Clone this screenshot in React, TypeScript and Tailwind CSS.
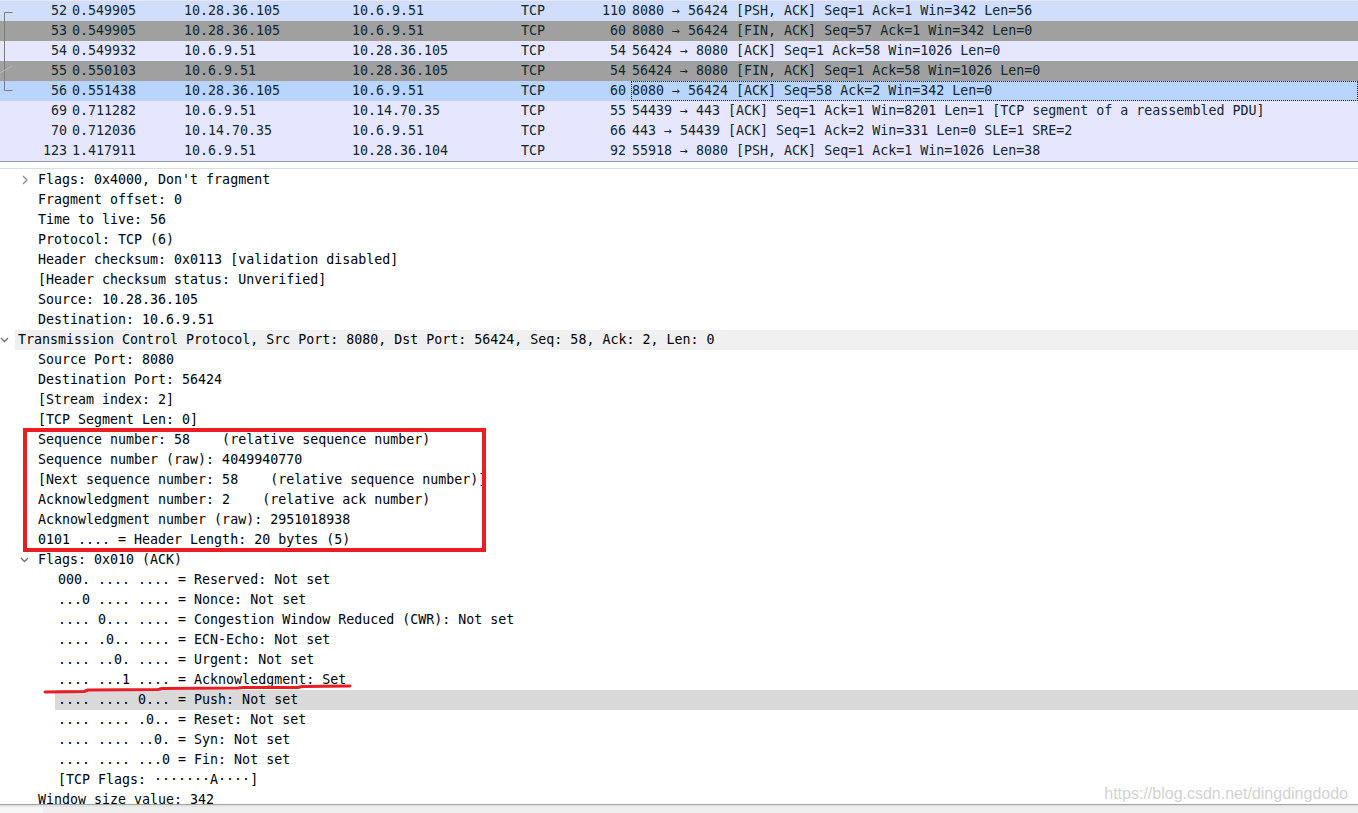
import type { ReactNode } from 'react';

type Packet = {
  no: string;
  time: string;
  src: string;
  dst: string;
  proto: string;
  len: string;
  info: string;
  bg: string;
  focus?: boolean;
};

type Node = {
  lvl: number;
  arrow?: 'right' | 'down';
  text: string;
  bg?: string;
};

const packets: Packet[] = [
  { no: '52', time: '0.549905', src: '10.28.36.105', dst: '10.6.9.51', proto: 'TCP', len: '110', info: '8080 → 56424 [PSH, ACK] Seq=1 Ack=1 Win=342 Len=56', bg: 'bg-[#d0ddfb]' },
  { no: '53', time: '0.549905', src: '10.28.36.105', dst: '10.6.9.51', proto: 'TCP', len: '60', info: '8080 → 56424 [FIN, ACK] Seq=57 Ack=1 Win=342 Len=0', bg: 'bg-[#a0a0a0]' },
  { no: '54', time: '0.549932', src: '10.6.9.51', dst: '10.28.36.105', proto: 'TCP', len: '54', info: '56424 → 8080 [ACK] Seq=1 Ack=58 Win=1026 Len=0', bg: 'bg-[#e7e6ff]' },
  { no: '55', time: '0.550103', src: '10.6.9.51', dst: '10.28.36.105', proto: 'TCP', len: '54', info: '56424 → 8080 [FIN, ACK] Seq=1 Ack=58 Win=1026 Len=0', bg: 'bg-[#a0a0a0]' },
  { no: '56', time: '0.551438', src: '10.28.36.105', dst: '10.6.9.51', proto: 'TCP', len: '60', info: '8080 → 56424 [ACK] Seq=58 Ack=2 Win=342 Len=0', bg: 'bg-[#b9d4fd]', focus: true },
  { no: '69', time: '0.711282', src: '10.6.9.51', dst: '10.14.70.35', proto: 'TCP', len: '55', info: '54439 → 443 [ACK] Seq=1 Ack=1 Win=8201 Len=1 [TCP segment of a reassembled PDU]', bg: 'bg-[#e7e6ff]' },
  { no: '70', time: '0.712036', src: '10.14.70.35', dst: '10.6.9.51', proto: 'TCP', len: '66', info: '443 → 54439 [ACK] Seq=1 Ack=2 Win=331 Len=0 SLE=1 SRE=2', bg: 'bg-[#e7e6ff]' },
  { no: '123', time: '1.417911', src: '10.6.9.51', dst: '10.28.36.104', proto: 'TCP', len: '92', info: '55918 → 8080 [PSH, ACK] Seq=1 Ack=1 Win=1026 Len=38', bg: 'bg-[#e7e6ff]' },
];

const tree: Node[] = [
  { lvl: 1, arrow: 'right', text: "Flags: 0x4000, Don't fragment" },
  { lvl: 1, text: 'Fragment offset: 0' },
  { lvl: 1, text: 'Time to live: 56' },
  { lvl: 1, text: 'Protocol: TCP (6)' },
  { lvl: 1, text: 'Header checksum: 0x0113 [validation disabled]' },
  { lvl: 1, text: '[Header checksum status: Unverified]' },
  { lvl: 1, text: 'Source: 10.28.36.105' },
  { lvl: 1, text: 'Destination: 10.6.9.51' },
  { lvl: 0, arrow: 'down', text: 'Transmission Control Protocol, Src Port: 8080, Dst Port: 56424, Seq: 58, Ack: 2, Len: 0', bg: 'bg-[#f0f0f0]' },
  { lvl: 1, text: 'Source Port: 8080' },
  { lvl: 1, text: 'Destination Port: 56424' },
  { lvl: 1, text: '[Stream index: 2]' },
  { lvl: 1, text: '[TCP Segment Len: 0]' },
  { lvl: 1, text: 'Sequence number: 58    (relative sequence number)' },
  { lvl: 1, text: 'Sequence number (raw): 4049940770' },
  { lvl: 1, text: '[Next sequence number: 58    (relative sequence number)]' },
  { lvl: 1, text: 'Acknowledgment number: 2    (relative ack number)' },
  { lvl: 1, text: 'Acknowledgment number (raw): 2951018938' },
  { lvl: 1, text: '0101 .... = Header Length: 20 bytes (5)' },
  { lvl: 1, arrow: 'down', text: 'Flags: 0x010 (ACK)' },
  { lvl: 2, text: '000. .... .... = Reserved: Not set' },
  { lvl: 2, text: '...0 .... .... = Nonce: Not set' },
  { lvl: 2, text: '.... 0... .... = Congestion Window Reduced (CWR): Not set' },
  { lvl: 2, text: '.... .0.. .... = ECN-Echo: Not set' },
  { lvl: 2, text: '.... ..0. .... = Urgent: Not set' },
  { lvl: 2, text: '.... ...1 .... = Acknowledgment: Set' },
  { lvl: 2, text: '.... .... 0... = Push: Not set', bg: 'bg-[#d9d9d9]' },
  { lvl: 2, text: '.... .... .0.. = Reset: Not set' },
  { lvl: 2, text: '.... .... ..0. = Syn: Not set' },
  { lvl: 2, text: '.... .... ...0 = Fin: Not set' },
  { lvl: 2, text: '[TCP Flags: ·······A····]' },
  { lvl: 1, text: 'Window size value: 342' },
];

const indents = ['w-0', 'w-5', 'w-10'];

function Chevron({ dir }: { dir: 'right' | 'down' }) {
  return (
    <svg width="10" height="10" viewBox="0 0 10 10" className="shrink-0">
      {dir === 'right' ? (
        <path d="M3 1 L7 5 L3 9" fill="none" stroke="#8a8a8a" strokeWidth="1.3" />
      ) : (
        <path d="M1 3 L4.5 6.5 L8 3" fill="none" stroke="#6e6e6e" strokeWidth="1.3" />
      )}
    </svg>
  );
}

function PacketRow({ p }: { p: Packet }) {
  return (
    <div className={`flex h-5 items-stretch whitespace-pre text-[#12272e] ${p.bg}`}>
      <div className="w-[67px] shrink-0 text-right leading-5">{p.no}</div>
      <div className="ml-[5px] w-[112px] shrink-0 leading-5">{p.time}</div>
      <div className="w-[168px] shrink-0 leading-5">{p.src}</div>
      <div className="w-[169px] shrink-0 leading-5">{p.dst}</div>
      <div className="w-[65px] shrink-0 leading-5">{p.proto}</div>
      <div className="w-[40px] shrink-0 text-right leading-5">{p.len}</div>
      <div
        className={`ml-[5px] flex-1 border leading-[18px] ${
          p.focus ? 'border-dotted border-[#222]' : 'border-transparent'
        }`}
      >
        {p.info}
      </div>
    </div>
  );
}

function TreeRow({ n }: { n: Node }) {
  return (
    <div className="flex h-5 items-stretch whitespace-pre text-black">
      <div className={`${indents[n.lvl]} shrink-0`} />
      <div className="flex w-[15px] shrink-0 items-center">
        {n.arrow ? <Chevron dir={n.arrow} /> : null}
      </div>
      <div className={`flex-1 pl-[3px] leading-5 ${n.bg ?? ''}`}>{n.text}</div>
    </div>
  );
}

function Overlay({ children }: { children: ReactNode }) {
  return <div className="pointer-events-none absolute inset-0">{children}</div>;
}

export default function App() {
  return (
    <div
      className="relative flex h-[813px] w-[1358px] flex-col overflow-hidden bg-white text-[13.3px]"
      style={{ fontFamily: '"DejaVu Sans Mono", "Liberation Mono", monospace' }}
    >
      {/* packet list */}
      <div className="relative shrink-0 border-b border-[#9a9aa6]">
        <div className="h-px bg-[#e7e6ff]" />
        {packets.map((p) => (
          <PacketRow key={p.no} p={p} />
        ))}
        <svg className="absolute left-0 top-0" width="16" height="100" viewBox="0 0 16 100">
          <path d="M12.5 12.5 H4.5 V90.5 H12.5" fill="none" stroke="#7c7c7c" strokeWidth="1" />
          <path d="M0 73 L12 66" fill="none" stroke="#b8b8b8" strokeWidth="1" />
        </svg>
      </div>

      {/* splitter */}
      <div className="h-[6px] shrink-0 bg-white" />

      {/* details tree */}
      <div className="relative h-[636px] shrink-0 overflow-hidden border-t border-[#dcdcdc] pt-px">
        {tree.map((n, i) => (
          <TreeRow key={i} n={n} />
        ))}
      </div>

      {/* bytes pane edge */}
      <div className="flex flex-1 flex-col border-t border-[#a0a0a0]">
        <div className="h-[2px] bg-[#e4e4e4]" />
        <div className="flex flex-1 bg-[#efefef]">
          <div className="w-[43px] bg-[#f7f7f7]" />
        </div>
      </div>

      <Overlay>
        {/* red box */}
        <div className="absolute left-[23px] top-[428px] h-[124px] w-[463px] border-[4px] border-[#ec1c24]" />
        {/* red underline */}
        <svg className="absolute left-0 top-0" width="400" height="720" viewBox="0 0 400 720">
          <polyline
            points="45,692 84,691.5 88,690 158,689.5 162,688.5 238,688 244,687.5 298,687.5 302,686.5 350,686"
            fill="none"
            stroke="#e81d25"
            strokeWidth="3"
            strokeLinecap="round"
            strokeLinejoin="round"
          />
        </svg>
        {/* watermark */}
        <div
          className="absolute right-[10px] top-[782px] text-[16px] text-[#d2d2d2]"
          style={{ fontFamily: '"Liberation Sans", Arial, sans-serif' }}
        >
          https://blog.csdn.net/dingdingdodo
        </div>
      </Overlay>
    </div>
  );
}
